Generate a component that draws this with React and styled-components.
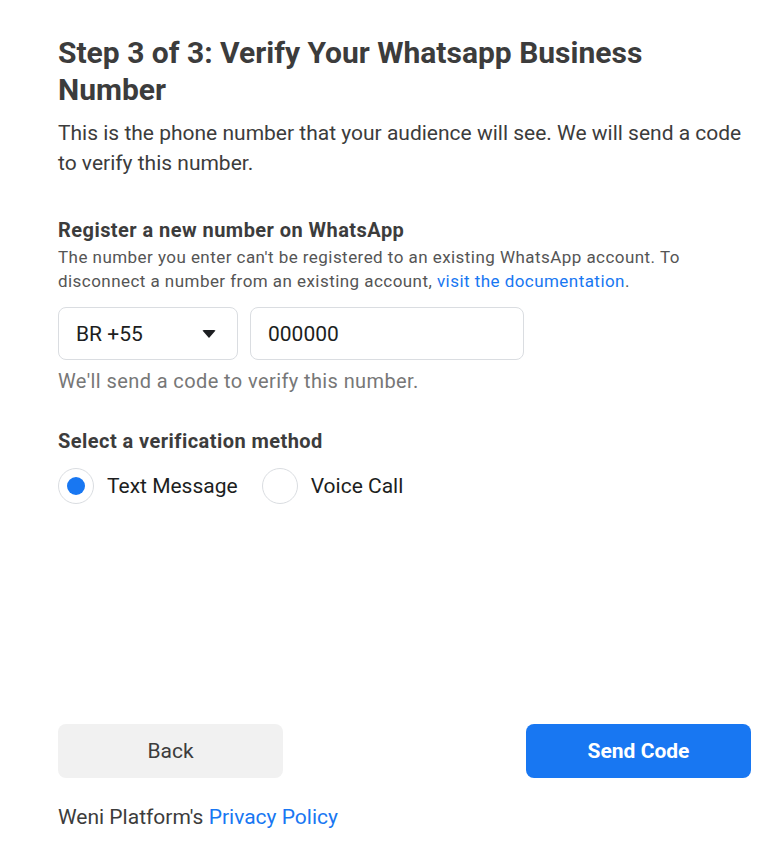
import React, { useState } from 'react';
import styled, { createGlobalStyle } from 'styled-components';

const GlobalStyle = createGlobalStyle`
  body {
    margin: 0;
    background: #fff;
    font-family: Roboto, "Noto Sans", sans-serif;
    color: #3c3c3c;
  }
`;

const Page = styled.div`
  width: 784px;
  height: 861px;
  box-sizing: border-box;
  padding: 34px 33px 0 58px;
  display: flex;
  flex-direction: column;
`;

const Title = styled.h1`
  margin: 0;
  font-size: 30px;
  line-height: 37px;
  font-weight: 700;
  color: #3c3c3c;
`;

const Lead = styled.p`
  margin: 10px 0 0;
  font-size: 21px;
  line-height: 30px;
  color: #3c3c3c;
`;

const Section = styled.section`
  margin-top: ${({ $top }) => $top}px;
`;

const Label = styled.h2`
  margin: 0;
  font-size: 20px;
  line-height: 26px;
  letter-spacing: 0.45px;
  font-weight: 700;
  color: #3c3c3c;
`;

const Hint = styled.p`
  margin: 2px 0 0;
  font-size: 17px;
  line-height: 24px;
  letter-spacing: 0.45px;
  color: #555;
`;

const Link = styled.a`
  color: #1877f2;
  text-decoration: none;
  cursor: pointer;
`;

const PhoneRow = styled.div`
  display: flex;
  gap: 12px;
  margin-top: 14px;
`;

const Field = styled.div`
  box-sizing: border-box;
  width: ${({ $w }) => $w}px;
  height: 53px;
  border: 1px solid #dadde1;
  border-radius: 8px;
  padding: 0 17px;
  display: flex;
  align-items: center;
  justify-content: space-between;
  font-size: 21px;
  color: #1c1e21;
`;

const Caret = styled.span`
  width: 0;
  height: 0;
  border-left: 7px solid transparent;
  border-right: 7px solid transparent;
  border-top: 8px solid #1c1e21;
  border-radius: 2px;
  margin-right: 4px;
`;

const Helper = styled.p`
  margin: 9px 0 0;
  font-size: 20px;
  line-height: 24px;
  letter-spacing: 0.4px;
  color: #777;
`;

const Radios = styled.div`
  display: flex;
  align-items: center;
  gap: 24px;
  margin-top: 14px;
`;

const RadioItem = styled.label`
  display: flex;
  align-items: center;
  gap: 13px;
  font-size: 21px;
  color: #1c1e21;
  cursor: pointer;
`;

const Dot = styled.span`
  box-sizing: border-box;
  width: 36px;
  height: 36px;
  border-radius: 50%;
  border: 1px solid #dadde1;
  display: flex;
  align-items: center;
  justify-content: center;
  &::after {
    content: '';
    width: 18px;
    height: 18px;
    border-radius: 50%;
    background: ${({ $on }) => ($on ? '#1877f2' : 'transparent')};
  }
`;

const Actions = styled.div`
  margin-top: auto;
  display: flex;
  justify-content: space-between;
`;

const Button = styled.button`
  width: 225px;
  height: 54px;
  border: none;
  border-radius: 8px;
  font-family: Roboto, sans-serif;
  font-size: 21px;
  font-weight: ${({ $primary }) => ($primary ? 700 : 400)};
  background: ${({ $primary }) => ($primary ? '#1877f2' : '#f1f1f1')};
  color: ${({ $primary }) => ($primary ? '#fff' : '#3c3c3c')};
  cursor: pointer;
`;

const Footer = styled.p`
  margin: 26px 0 31px;
  font-size: 21px;
  line-height: 26px;
  color: #3c3c3c;
`;

export default function App() {
  const [method, setMethod] = useState('sms');
  return (
    <>
      <GlobalStyle />
      <Page>
        <Title>Step 3 of 3: Verify Your Whatsapp Business Number</Title>
        <Lead>
          This is the phone number that your audience will see. We will send a code to verify this number.
        </Lead>

        <Section $top={39}>
          <Label>Register a new number on WhatsApp</Label>
          <Hint>
            The number you enter can't be registered to an existing WhatsApp account. To disconnect a number
            from an existing account, <Link>visit the documentation</Link>.
          </Hint>
          <PhoneRow>
            <Field $w={180}>
              BR +55
              <Caret />
            </Field>
            <Field $w={274}>000000</Field>
          </PhoneRow>
          <Helper>We'll send a code to verify this number.</Helper>
        </Section>

        <Section $top={35}>
          <Label>Select a verification method</Label>
          <Radios>
            <RadioItem onClick={() => setMethod('sms')}>
              <Dot $on={method === 'sms'} />
              Text Message
            </RadioItem>
            <RadioItem onClick={() => setMethod('voice')}>
              <Dot $on={method === 'voice'} />
              Voice Call
            </RadioItem>
          </Radios>
        </Section>

        <Actions>
          <Button>Back</Button>
          <Button $primary>Send Code</Button>
        </Actions>
        <Footer>
          Weni Platform's <Link>Privacy Policy</Link>
        </Footer>
      </Page>
    </>
  );
}
